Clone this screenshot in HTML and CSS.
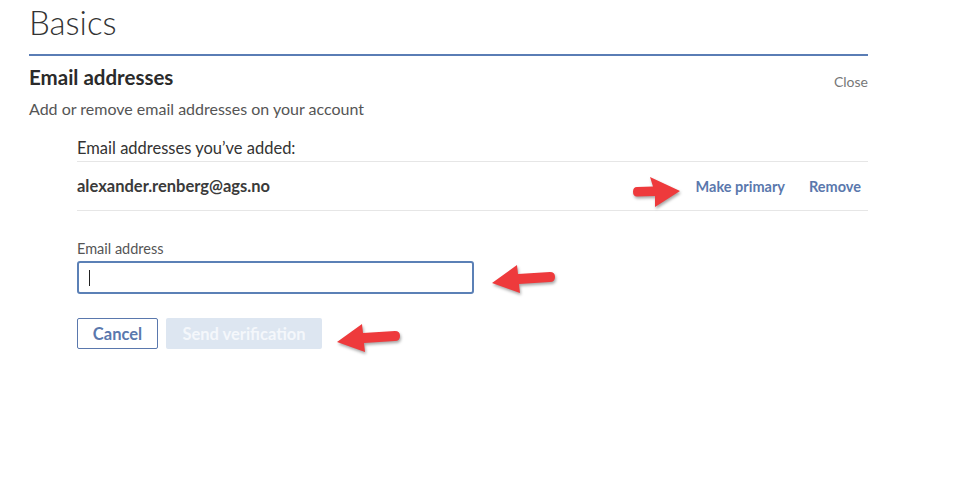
FILE: index.html
```html
<!DOCTYPE html>
<html>
<head>
<meta charset="utf-8">
<link rel="stylesheet" href="styles.css">
</head>
<body>
<div class="page">
  <h1 class="title">Basics</h1>
  <div class="section-head">
    <h2 class="section-title">Email addresses</h2>
    <a class="close">Close</a>
  </div>
  <p class="desc">Add or remove email addresses on your account</p>
  <div class="inner">
    <div class="added-label">Email addresses you’ve added:</div>
    <div class="email-row">
      <span class="email">alexander.renberg@ags.no</span>
      <div class="actions">
        <a class="action">Make primary</a>
        <a class="action">Remove</a>
      </div>
    </div>
    <label class="field-label">Email address</label>
    <div class="input"><span class="caret"></span></div>
    <div class="buttons">
      <button class="btn btn-cancel">Cancel</button>
      <button class="btn btn-send">Send verification</button>
    </div>
  </div>
</div>

<svg class="arrow arrow-1" width="52" height="34" viewBox="0 0 52 34">
  <path d="M6 12 L22 11.5 L19 2 L49 16 L24 32 L24 21 L6 21.5 Q2 21.5 2 16.75 Q2 12 6 12 Z" fill="#ee3a3c"/>
</svg>
<svg class="arrow arrow-2" width="70" height="34" viewBox="0 0 70 34">
  <path d="M62 10 Q67 10 67 15 Q67 20 62 20 L31 22 L32 31 L4 21 L29 3 L30 12 Z" fill="#ee3a3c"/>
</svg>
<svg class="arrow arrow-3" width="70" height="34" viewBox="0 0 70 34">
  <path d="M62 10 Q67 10 67 15 Q67 20 62 20 L31 22 L32 31 L4 21 L29 3 L30 12 Z" fill="#ee3a3c"/>
</svg>
</body>
</html>
```
FILE: styles.css
```css
* { box-sizing: border-box; }
html, body { margin: 0; padding: 0; background: #fff; }
body {
  font-family: "Lato", "Open Sans", sans-serif;
  color: #333;
  width: 974px;
  height: 479px;
  position: relative;
  overflow: hidden;
}
.page {
  width: 839px;
  margin-left: 29px;
}
.title {
  margin: 0;
  font-weight: 300;
  font-size: 33px;
  line-height: 40px;
  padding-top: 2px;
  color: #333;
  height: 56px;
  border-bottom: 2px solid #5a7db5;
}
.section-head {
  display: flex;
  justify-content: space-between;
  align-items: flex-start;
  margin-top: 9px;
}
.section-title {
  margin: 0;
  font-size: 20.5px;
  font-weight: 700;
  line-height: 24px;
  color: #2b2b2b;
}
.close {
  font-size: 14px;
  color: #777;
  line-height: 18px;
  padding-top: 8px;
}
.desc {
  margin: 8px 0 0;
  font-size: 16px;
  line-height: 20px;
  color: #555;
}
.inner {
  margin-left: 48px;
  margin-top: 19px;
}
.added-label {
  font-size: 16.5px;
  line-height: 20px;
  color: #333;
  padding-bottom: 3px;
  border-bottom: 1px solid #e6e6e6;
}
.email-row {
  display: flex;
  justify-content: space-between;
  align-items: center;
  height: 49px;
  border-bottom: 1px solid #e6e6e6;
}
.email {
  font-size: 16.5px;
  font-weight: 700;
  color: #3a3a3a;
}
.actions {
  display: flex;
  gap: 24px;
  padding-right: 7px;
}
.action {
  font-size: 14.5px;
  font-weight: 700;
  color: #5a78ad;
}
.field-label {
  display: block;
  margin-top: 29px;
  font-size: 14.5px;
  line-height: 18px;
  color: #555;
}
.input {
  margin-top: 3px;
  width: 397px;
  height: 33px;
  border: 2px solid #5b80b6;
  border-radius: 3px;
  display: flex;
  align-items: center;
  padding-left: 10px;
}
.caret {
  width: 1px;
  height: 16px;
  background: #222;
}
.buttons {
  display: flex;
  gap: 8px;
  margin-top: 24px;
}
.btn {
  font-family: "Lato", "Open Sans", sans-serif;
  font-size: 16.5px;
  font-weight: 700;
  height: 31px;
  border-radius: 2px;
  padding: 0;
}
.btn-cancel {
  width: 81px;
  background: #fff;
  color: #5a78ad;
  border: 1px solid #5a78ad;
}
.btn-send {
  width: 156px;
  background: #dde6f1;
  color: #f4f7fb;
  border: none;
}
.arrow {
  position: absolute;
  filter: drop-shadow(1px 2px 1.5px rgba(0,0,0,0.35));
}
.arrow-1 { left: 631px; top: 175px; }
.arrow-2 { left: 488px; top: 262px; }
.arrow-3 { left: 333px; top: 321px; }
```
